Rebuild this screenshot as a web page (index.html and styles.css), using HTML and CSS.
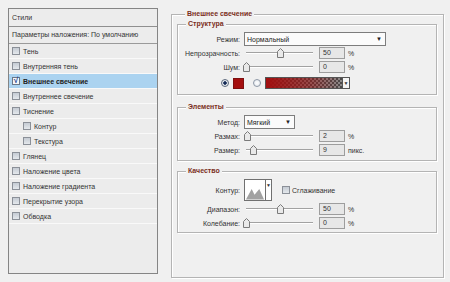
FILE: index.html
```html
<!DOCTYPE html>
<html lang="ru">
<head>
    <meta charset="UTF-8">
    <meta name="viewport" content="width=device-width, initial-scale=1.0">
    <title>Стиль слоя</title>
    <link rel="stylesheet" href="styles.css">
</head>
<body>
    <div class="dialog">
        <!-- Styles list on the left -->
        <div class="styles-list">
            <div class="list-head">Стили</div>
            <div class="list-blend">Параметры наложения: По умолчанию</div>
            <div class="list-item"><span class="check"></span>Тень</div>
            <div class="list-item"><span class="check"></span>Внутренняя тень</div>
            <div class="list-item selected"><span class="check on">√</span>Внешнее свечение</div>
            <div class="list-item"><span class="check"></span>Внутреннее свечение</div>
            <div class="list-item"><span class="check"></span>Тиснение</div>
            <div class="list-item sub"><span class="check"></span>Контур</div>
            <div class="list-item sub"><span class="check"></span>Текстура</div>
            <div class="list-item"><span class="check"></span>Глянец</div>
            <div class="list-item"><span class="check"></span>Наложение цвета</div>
            <div class="list-item"><span class="check"></span>Наложение градиента</div>
            <div class="list-item"><span class="check"></span>Перекрытие узора</div>
            <div class="list-item"><span class="check"></span>Обводка</div>
        </div>

        <div class="group">
            <div class="title">Внешнее свечение</div>

            <div class="section structure">
                <div class="title">Структура</div>
                <div class="row">
                    <span class="label">Режим:</span>
                    <div class="select mode">Нормальный<span class="arrow">▼</span></div>
                </div>
                <div class="row">
                    <span class="label">Непрозрачность:</span>
                    <div class="slider"><svg class="thumb" style="left:50%" viewBox="0 0 7 10"><polygon points="0.5,3.5 3.5,0.5 6.5,3.5 6.5,9.5 0.5,9.5"/></svg></div>
                    <div class="num">50</div><span class="unit">%</span>
                </div>
                <div class="row">
                    <span class="label">Шум:</span>
                    <div class="slider"><svg class="thumb" style="left:0%" viewBox="0 0 7 10"><polygon points="0.5,3.5 3.5,0.5 6.5,3.5 6.5,9.5 0.5,9.5"/></svg></div>
                    <div class="num">0</div><span class="unit">%</span>
                </div>
                <div class="row color-row">
                    <span class="radio on"></span>
                    <span class="swatch"></span>
                    <span class="radio"></span>
                    <span class="gradient"></span><span class="drop">▼</span>
                </div>
            </div>

            <div class="section elements">
                <div class="title">Элементы</div>
                <div class="row">
                    <span class="label">Метод:</span>
                    <div class="select method">Мягкий<span class="arrow">▼</span></div>
                </div>
                <div class="row">
                    <span class="label">Размах:</span>
                    <div class="slider"><svg class="thumb" style="left:2%" viewBox="0 0 7 10"><polygon points="0.5,3.5 3.5,0.5 6.5,3.5 6.5,9.5 0.5,9.5"/></svg></div>
                    <div class="num">2</div><span class="unit">%</span>
                </div>
                <div class="row">
                    <span class="label">Размер:</span>
                    <div class="slider"><svg class="thumb" style="left:10%" viewBox="0 0 7 10"><polygon points="0.5,3.5 3.5,0.5 6.5,3.5 6.5,9.5 0.5,9.5"/></svg></div>
                    <div class="num">9</div><span class="unit">пикс.</span>
                </div>
            </div>

            <div class="section quality">
                <div class="title">Качество</div>
                <div class="row contour-row">
                    <span class="label">Контур:</span>
                    <div class="contour">
                        <svg class="contour-pic" viewBox="0 0 21 20"><polygon points="1,20 7,9 10,15 15,9 20,20"/></svg>
                        <span class="contour-drop">▼</span>
                    </div>
                    <span class="check smooth"></span><span>Сглаживание</span>
                </div>
                <div class="row range">
                    <span class="label">Диапазон:</span>
                    <div class="slider"><svg class="thumb" style="left:50%" viewBox="0 0 7 10"><polygon points="0.5,3.5 3.5,0.5 6.5,3.5 6.5,9.5 0.5,9.5"/></svg></div>
                    <div class="num">50</div><span class="unit">%</span>
                </div>
                <div class="row">
                    <span class="label">Колебание:</span>
                    <div class="slider"><svg class="thumb" style="left:0%" viewBox="0 0 7 10"><polygon points="0.5,3.5 3.5,0.5 6.5,3.5 6.5,9.5 0.5,9.5"/></svg></div>
                    <div class="num">0</div><span class="unit">%</span>
                </div>
            </div>
        </div>
    </div>
</body>
</html>
```

FILE: styles.css
```css
* {
    box-sizing: border-box;
}

body {
    margin: 0;
    width: 450px;
    height: 282px;
    overflow: hidden;
    background-color: #f0f0f0;
    font-family: "Liberation Sans", Arial, sans-serif;
    font-size: 7px;
    color: #333;
}

.dialog {
    display: flex;
    align-items: flex-start;
    padding: 8px 0 0 8px;
}

/* left list */
.styles-list {
    width: 150px;
    height: 266px;
    border: 1px solid #858585;
    background-color: #ececec;
}

.list-head {
    height: 18px;
    line-height: 17px;
    padding-left: 3px;
    border-bottom: 1px solid #8f8f8f;
}

.list-blend {
    height: 17px;
    line-height: 16px;
    padding-left: 3px;
    border-bottom: 1px solid #9a9a9a;
    white-space: nowrap;
}

.list-item {
    display: flex;
    align-items: center;
    height: 15px;
    padding-left: 3px;
    border-bottom: 1px solid #f9f9f9;
}

.list-item.sub {
    padding-left: 14px;
}

.list-item.selected {
    background-color: #abd3f0;
    font-weight: bold;
    color: #222;
}

.check {
    display: inline-block;
    width: 8px;
    height: 8px;
    margin-right: 3px;
    border: 1px solid #8b9098;
    background: linear-gradient(#c5cbd3, #e4e8ec);
}

.check.on {
    background: #f4f6f8;
    border-color: #6b7686;
    color: #1c3f8f;
    font-size: 8px;
    line-height: 6px;
    text-align: center;
    font-weight: bold;
}

/* right groups */
.group,
.section {
    border: 1px solid #b4b4b4;
    box-shadow: inset 1px 1px 0 #fff, 1px 1px 0 #fff;
}

.title {
    width: fit-content;
    margin: -6px 0 0 8px;
    padding: 0 2px;
    line-height: 10px;
    font-weight: bold;
    color: #7b2f22;
    background-color: #f0f0f0;
}

.group {
    margin: 6px 0 0 13px;
    width: 273px;
    height: 264px;
    padding: 0 6px 0 5px;
}

.section {
    width: 260px;
    margin-top: 5px;
    padding: 0 0 3px 0;
}

.section .title {
    margin-bottom: 3px;
}

.structure {
    padding-bottom: 4px;
}

.elements {
    margin-top: 12px;
}

.quality {
    margin-top: 10px;
    padding-bottom: 2px;
}

.row {
    display: flex;
    align-items: center;
    height: 14px;
}

.label {
    width: 62px;
    margin-right: 4px;
    text-align: right;
    white-space: nowrap;
}

.select {
    display: flex;
    align-items: center;
    justify-content: space-between;
    height: 14px;
    padding: 0 3px 0 2px;
    border: 1px solid #7d7d7d;
    background-color: #fbfbfb;
    color: #222;
}

.select.mode {
    width: 142px;
}

.select.method {
    width: 51px;
}

.arrow {
    font-size: 6px;
}

.slider {
    position: relative;
    width: 67px;
    height: 2px;
    margin: 0 6px 0 2px;
    border-top: 1px solid #a2a2a2;
    border-bottom: 1px solid #fff;
}

.thumb {
    position: absolute;
    top: -5px;
    width: 7px;
    height: 10px;
    margin-left: -3px;
}

.thumb polygon {
    fill: #e9e9e9;
    stroke: #7a7a7a;
    stroke-width: 1;
}

.num {
    width: 26px;
    height: 12px;
    padding-left: 3px;
    line-height: 10px;
    border: 1px solid #9d9d9d;
    background-color: #e7e7e7;
}

.unit {
    margin-left: 3px;
}

.color-row {
    margin-top: 2px;
    padding-left: 43px;
}

.radio {
    width: 8px;
    height: 8px;
    border-radius: 50%;
    border: 1px solid #8e98a6;
    background: radial-gradient(#ffffff, #dfe4ea);
}

.radio.on {
    background: radial-gradient(#142a55 0 35%, #e6eaef 45%);
    border-color: #5d6a7c;
}

.swatch {
    width: 11px;
    height: 11px;
    margin: 0 9px 0 4px;
    background-color: #a50f0f;
    border: 1px solid #7e1010;
}

.gradient {
    width: 78px;
    height: 12px;
    margin-left: 4px;
    border: 1px solid #555;
    background: linear-gradient(to right, #a30f0f 0%, rgba(163, 15, 15, 0.55) 55%, rgba(163, 15, 15, 0) 100%),
        repeating-conic-gradient(#4a4a4a 0 25%, #8a8a8a 0 50%) 0 0 / 4px 4px;
}

.drop {
    width: 7px;
    height: 12px;
    border: 1px solid #555;
    border-left: none;
    background-color: #f4f4f4;
    font-size: 5px;
    line-height: 10px;
    text-align: center;
}

.contour-row {
    height: 22px;
}

.contour {
    display: flex;
    width: 28px;
    height: 22px;
    border: 1px solid #707070;
    background-color: #fff;
}

.contour-pic {
    width: 21px;
    height: 20px;
    border-right: 1px solid #707070;
}

.contour-pic polygon {
    fill: #a2a2a2;
}

.contour-drop {
    flex: 1;
    font-size: 5px;
    line-height: 10px;
    text-align: center;
}

.check.smooth {
    margin-left: 10px;
    margin-right: 2px;
}

.range {
    margin-top: 1px;
}
```
